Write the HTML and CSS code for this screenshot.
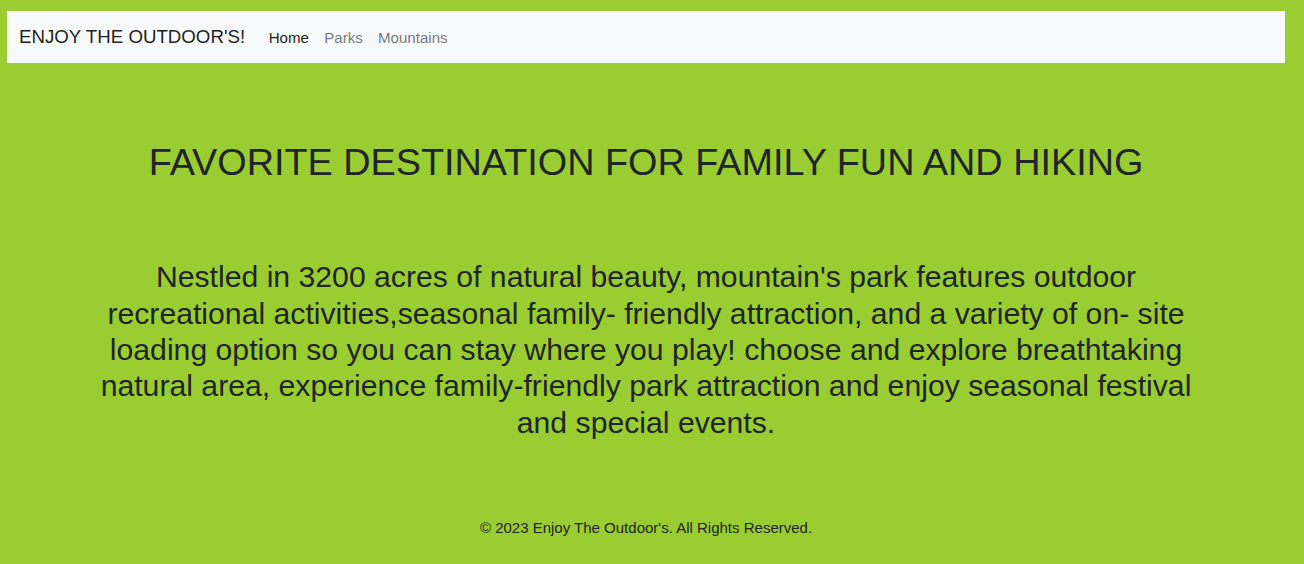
FILE: index.html
```html
<!DOCTYPE html>
<html lang="en">
<head>
<meta charset="utf-8">
<title>Enjoy The Outdoor's</title>
<link rel="stylesheet" href="styles.css">
</head>
<body>
<nav class="navbar">
  <a class="brand" href="#">ENJOY THE OUTDOOR'S!</a>
  <ul class="nav">
    <li><a class="nav-link active" href="#">Home</a></li>
    <li><a class="nav-link" href="#">Parks</a></li>
    <li><a class="nav-link" href="#">Mountains</a></li>
  </ul>
</nav>
<main class="main">
  <h1 class="title">FAVORITE DESTINATION FOR FAMILY FUN AND HIKING</h1>
  <p class="intro">Nestled in 3200 acres of natural beauty, mountain's park features outdoor recreational activities,seasonal family- friendly attraction, and a variety of on- site loading option so you can stay where you play! choose and explore breathtaking natural area, experience family-friendly park attraction and enjoy seasonal festival and special events.</p>
</main>
<footer class="footer">© 2023 Enjoy The Outdoor's. All Rights Reserved.</footer>
</body>
</html>
```

FILE: styles.css
```css
html, body {
  background: #9acd32;
}
body {
  margin: 11px 19px 0 7px;
  font-family: "Liberation Sans", Arial, sans-serif;
  color: #212529;
}
.navbar {
  display: flex;
  align-items: center;
  height: 52px;
  background: #f8f9fa;
  padding: 0 12px;
}
.brand {
  font-size: 18.7px;
  color: rgba(0,0,0,.9);
  text-decoration: none;
  margin-right: 16px;
}
.nav {
  display: flex;
  list-style: none;
  margin: 0;
  padding: 0;
}
.nav-link {
  display: block;
  font-size: 15.1px;
  padding: 8px 7.6px;
  color: rgba(0,0,0,.55);
  text-decoration: none;
}
.nav-link.active {
  color: rgba(0,0,0,.9);
}
.main {
  text-align: center;
}
.title {
  font-size: 37.8px;
  font-weight: 400;
  line-height: 1.2;
  margin: 77px 0 0;
}
.intro {
  font-size: 30.2px;
  line-height: 36.3px;
  margin: 74px auto 0;
  max-width: 1100px;
}
.footer {
  text-align: center;
  font-size: 15px;
  margin-top: 78px;
}
```
